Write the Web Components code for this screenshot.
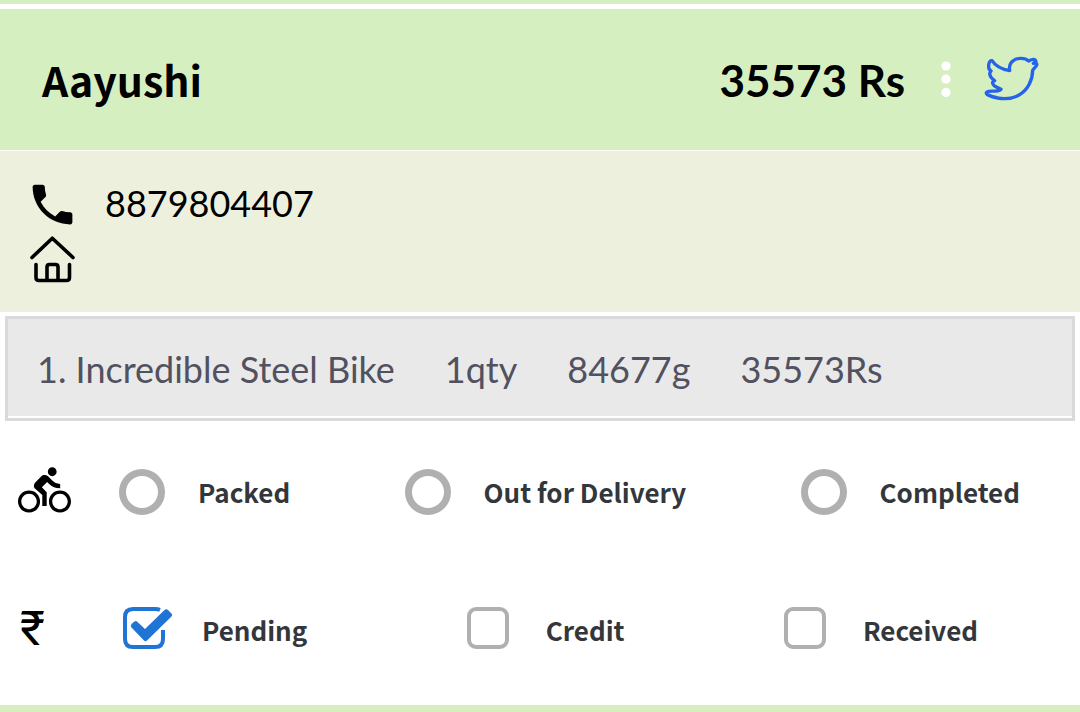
<!DOCTYPE html>
<html lang="en">
<head>
<meta charset="utf-8">
<meta name="viewport" content="width=device-width, initial-scale=1">
<title>Orders</title>
<style>
  body { margin: 0; background: #fff; color: #000; font-family: "Noto Sans CJK SC", "Noto Sans", sans-serif; }
</style>
</head>
<body>
<order-card>
  <order-header slot="header">Aayushi<span slot="total">35573 Rs</span></order-header>
  <order-contact slot="contact">8879804407</order-contact>
  <order-item slot="items">1. Incredible Steel Bike<span slot="qty">1qty</span><span slot="weight">84677g</span><span slot="price">35573Rs</span></order-item>
  <status-row slot="status" icon="bike" label="Delivery status">
    <choice-option type="radio">Packed</choice-option>
    <choice-option type="radio">Out for Delivery</choice-option>
    <choice-option type="radio">Completed</choice-option>
  </status-row>
  <status-row slot="status" class="payment" icon="rupee" label="Payment status">
    <choice-option type="checkbox" checked>Pending</choice-option>
    <choice-option type="checkbox">Credit</choice-option>
    <choice-option type="checkbox">Received</choice-option>
  </status-row>
</order-card>

<script>
const define = (name, html, setup) => {
  const template = document.createElement('template');
  template.innerHTML = html;
  customElements.define(name, class extends HTMLElement {
    constructor() {
      super();
      this.attachShadow({ mode: 'open' }).append(template.content.cloneNode(true));
    }
    connectedCallback() { if (setup) setup(this, this.shadowRoot); }
  });
};

define('order-card', `
  <style>
    :host { display: block; border-top: 4px solid #d6efc1; border-bottom: 7px solid #d6efc1; padding-top: 5px; }
    .items { padding: 4px 5px 0; }
    .status { display: grid; gap: 64px; padding: 35px 0 41px; }
  </style>
  <slot name="header"></slot>
  <slot name="contact"></slot>
  <div class="items"><slot name="items"></slot></div>
  <div class="status"><slot name="status"></slot></div>
`);

define('order-header', `
  <style>
    :host { display: flex; align-items: center; box-sizing: border-box; min-height: 141px; padding: 0 40px 2px 42px; background: #d6efc1; }
    h1, .total { margin: 0; font-size: 41px; line-height: 48px; font-weight: 700; }
    .total { margin-left: auto; padding-top: 2px; font-family: Lato, sans-serif; font-size: 44px; }
    button { border: 0; padding: 0; background: none; display: block; }
    svg { display: block; }
    .more { margin: 0 27px 0 31px; }
  </style>
  <h1><slot></slot></h1>
  <span class="total"><slot name="total"></slot></span>
  <button class="more" aria-label="More options">
    <svg width="20" height="40" viewBox="0 0 20 40" fill="#fff"><circle cx="10" cy="7" r="4.6"/><circle cx="10" cy="20" r="4.6"/><circle cx="10" cy="33.400" r="4.600"/></svg>
  </button>
  <button aria-label="Share on Twitter">
    <svg width="57" height="47" viewBox="849 165 171 141" fill="none" stroke="#2563eb" stroke-width="10" stroke-linejoin="round">
      <path d="M929 212C905 208 885 196 876 182C868 180 864 194 867 207L873 213C866 219 870 231 878 237L884 242C872 245 880 259 889 261L903 268C890 278 870 270 861 276C852 283 875 290 893 294C915 298 939 295 957 285C983 270 998 240 998 211L1009 197C1013 191 1008 188 1000 190L1008 185C1006 175 996 178 986 183C975 173 951 173 940 182C929 190 927 201 929 212Z"/>
    </svg>
  </button>
`);

define('order-contact', `
  <style>
    :host { display: block; margin-top: 1px; padding: 27px 26px 28px; background: #eef0de; }
    .line { display: flex; align-items: center; gap: 26px; }
    svg { display: block; flex: none; }
    a { padding-bottom: 4px; color: inherit; text-decoration: none; font: 400 36px/48px Lato, sans-serif; }
  </style>
  <div class="line">
    <svg width="53" height="53" viewBox="0 0 24 24"><path d="M6.620 10.790c1.440 2.830 3.760 5.140 6.590 6.590l2.200-2.200c.270-.270.670-.360 1.020-.240 1.120.370 2.330.570 3.570.570.550 0 1 .450 1 1V20c0 .550-.450 1-1 1-9.390 0-17-7.610-17-17 0-.550.450-1 1-1h3.500c.550 0 1 .450 1 1 0 1.250.200 2.450.570 3.570.110.350.030.740-.250 1.020l-2.200 2.200z"/></svg>
    <a href="tel:8879804407"><slot></slot></a>
  </div>
  <div class="line">
    <svg width="53" height="53" viewBox="0 0 53 53" fill="none" stroke="#000" stroke-width="3.600" stroke-linecap="round" stroke-linejoin="round"><path d="M6 26.500L26.300 7.200 47 26.500M10 33.500V46.500Q10 49.500 13 49.500H40.500Q43.500 49.500 43.500 46.500V33.500M21 49V36Q21 33.500 23.500 33.500H29.500Q32 33.500 32 36V49"/></svg>
  </div>
`);

define('order-item', `
  <style>
    :host { display: flex; align-items: center; gap: 50px; box-sizing: border-box; min-height: 105px; padding: 0 29px; border: 3px solid #dadadc; background: #e9e9e9; box-shadow: inset 0 -2px #fff; color: #525160; font: 400 36px/48px Lato, sans-serif; }
  </style>
  <span><slot></slot></span>
  <slot name="qty"></slot>
  <slot name="weight"></slot>
  <slot name="price"></slot>
`);

define('status-row', `
  <style>
    :host { display: flex; align-items: center; min-height: 72px; padding: 0 60px 0 18px; }
    :host(.payment) { padding: 0 102px 0 20px; --label-drop: 4px; }
    .icon { flex: none; width: 101px; display: flex; }
    :host(.payment) .icon { width: 103px; }
    .bike { margin-bottom: 4px; }
    .rupee { font: 400 48px/53px Roboto, "Noto Sans", sans-serif; }
    .choices { flex: 1; display: flex; justify-content: space-between; }
  </style>
  <span class="icon">
    <svg class="bike" width="53" height="53" viewBox="0 0 24 24" aria-hidden="true"><path d="M15.500 5.500c1.100 0 2-.900 2-2s-.900-2-2-2-2 .900-2 2 .900 2 2 2zM5 12c-2.800 0-5 2.200-5 5s2.200 5 5 5 5-2.200 5-5-2.200-5-5-5zm0 8.500c-1.900 0-3.500-1.600-3.500-3.500s1.600-3.500 3.500-3.500 3.500 1.600 3.500 3.500-1.600 3.500-3.500 3.500zm5.800-10l2.400-2.400.8.8c1.300 1.300 3 2.100 5.100 2.100V9c-1.500 0-2.700-.600-3.600-1.500l-1.900-1.900c-.500-.400-1-.600-1.600-.600s-1.100.200-1.400.600L7.800 8.400c-.400.400-.600.900-.600 1.400 0 .600.200 1.100.600 1.400L11 14v5h2v-6.200l-2.200-2.300zM19 12c-2.800 0-5 2.200-5 5s2.200 5 5 5 5-2.200 5-5-2.200-5-5-5zm0 8.500c-1.900 0-3.500-1.600-3.500-3.500s1.600-3.500 3.500-3.500 3.500 1.600 3.500 3.500-1.600 3.500-3.500 3.500z"/></svg>
    <span class="rupee">₹</span>
  </span>
  <div class="choices" role="group"><slot></slot></div>
`, (host, root) => {
  root.querySelector(host.getAttribute('icon') === 'bike' ? '.rupee' : '.bike').remove();
  root.querySelector('.choices').setAttribute('aria-label', host.getAttribute('label'));
});

define('choice-option', `
  <style>
    :host { display: block; }
    label { display: flex; align-items: center; gap: 33px; color: #33373b; font-size: 26px; line-height: 36px; font-weight: 700; white-space: nowrap; }
    .text { padding-top: var(--label-drop, 0); }
    .box { display: grid; flex: none; }
    .box > * { grid-area: 1 / 1; }
    input { appearance: none; box-sizing: border-box; width: 46px; height: 46px; margin: 0; border: 7px solid #b0b0b0; border-radius: 50%; background: #fff; }
    input[type=checkbox] { width: 42px; height: 42px; border-width: 4px; border-radius: 9px; }
    label:has([type=checkbox]) { gap: 37px; }
    svg { display: none; width: 42px; height: 42px; overflow: visible; pointer-events: none; }
    input:checked { border-color: transparent; }
    input:checked + svg { display: block; }
    input[type=radio]:checked { border-color: #1f74d4; }
    input[type=radio] + svg { display: none; }
  </style>
  <label>
    <span class="box"><input>
      <svg viewBox="0 0 42 42" aria-hidden="true"><path d="M37 2.800Q35 2 32 2H10Q2 2 2 10V32Q2 40 10 40H32Q40 40 40 32V23" fill="none" stroke="#1f74d4" stroke-width="4"/><path d="M8.500 17L11.500 14.500Q13 13.500 14.500 15L22 22 41.500 3Q43.200 1.500 45 3L48.500 6.500Q50 8 48.500 9.500L24 33.500Q22.500 35 21 33.500L8.500 20.500Q7 19 8.500 17Z" fill="#1f74d4"/></svg>
    </span>
    <span class="text"><slot></slot></span>
  </label>
`, (host, root) => {
  const input = root.querySelector('input');
  input.type = host.getAttribute('type');
  input.checked = host.hasAttribute('checked');
  // Radios live in separate shadow roots, so siblings are cleared by hand.
  input.addEventListener('change', () => {
    if (input.type !== 'radio') return;
    for (const other of host.parentElement.children) {
      if (other !== host) other.shadowRoot.querySelector('input').checked = false;
    }
  });
});
</script>
</body>
</html>
